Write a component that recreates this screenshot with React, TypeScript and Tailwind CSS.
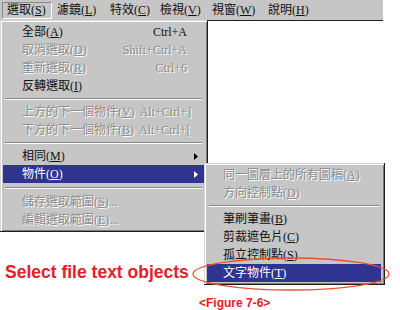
const cjk = "font-['Liberation_Serif','Noto_Sans_CJK_TC',serif]";

type Item =
  | { sep: true; h: string }
  | {
      sep?: false;
      label: string;
      key: string;
      tail?: string;
      shortcut?: string;
      disabled?: boolean;
      active?: boolean;
      arrow?: boolean;
    };

const mainMenu: Item[] = [
  { label: "全部", key: "A", shortcut: "Ctrl+A" },
  { label: "取消選取", key: "D", shortcut: "Shift+Ctrl+A", disabled: true },
  { label: "重新選取", key: "R", shortcut: "Ctrl+6", disabled: true },
  { label: "反轉選取", key: "I" },
  { sep: true, h: "h-[8px]" },
  { label: "上方的下一個物件", key: "V", shortcut: "Alt+Ctrl+]", disabled: true },
  { label: "下方的下一個物件", key: "B", shortcut: "Alt+Ctrl+[", disabled: true },
  { sep: true, h: "h-[8px]" },
  { label: "相同", key: "M", arrow: true },
  { label: "物件", key: "O", arrow: true, active: true },
  { sep: true, h: "h-[10px]" },
  { label: "儲存選取範圍", key: "S", tail: "...", disabled: true },
  { label: "編輯選取範圍", key: "E", tail: "...", disabled: true },
];

const subMenu: Item[] = [
  { label: "同一圖層上的所有圖稿", key: "A", disabled: true },
  { label: "方向控制點", key: "D", disabled: true },
  { sep: true, h: "h-[8px]" },
  { label: "筆刷筆畫", key: "B" },
  { label: "剪裁遮色片", key: "C" },
  { label: "孤立控制點", key: "S" },
  { label: "文字物件", key: "T", active: true },
];

const bar = [
  { label: "選取", key: "S", w: "w-[50px]", open: true },
  { label: "濾鏡", key: "L", w: "w-[53px]" },
  { label: "特效", key: "C", w: "w-[50px]" },
  { label: "檢視", key: "V", w: "w-[52px]" },
  { label: "視窗", key: "W", w: "w-[56px]" },
  { label: "說明", key: "H", w: "w-[50px]" },
];

const MenuRows = ({ items, pl }: { items: Item[]; pl: string }) => (
  <>
    {items.map((it, i) => {
      if (it.sep) {
        return (
          <div key={i} className={`${it.h} flex items-center px-[2px]`}>
            <div className="w-full border-t border-[#858585] border-b border-b-white" />
          </div>
        );
      }
      const color = it.active
        ? "bg-[#2e3490] text-white"
        : it.disabled
        ? "text-[#8c8c8c] [text-shadow:1px_1px_0_#ffffff]"
        : "text-[#111]";
      return (
        <div key={i} className={`h-[18px] flex items-center ${pl} pr-[17px] ${color}`}>
          <span className="flex-1 whitespace-nowrap">
            {it.label}(<u>{it.key}</u>){it.tail}
          </span>
          {it.shortcut && <span className="whitespace-nowrap pl-[5px]">{it.shortcut}</span>}
          {it.arrow && (
            <svg width="4" height="7" viewBox="0 0 4 7" className="-mr-[11px]">
              <path d="M0 0 L4 3.5 L0 7 Z" fill={it.active ? "#fff" : "#000"} />
            </svg>
          )}
        </div>
      );
    })}
  </>
);

export default function App() {
  return (
    <div className={`relative w-[400px] h-[310px] bg-white overflow-hidden text-[12px] ${cjk}`}>
      {/* Menu bar */}
      <div className="w-[383px] h-[20px] bg-[#c6c6c6] flex items-center pl-[2px]">
        {bar.map((b) => (
          <div
            key={b.label}
            className={`${b.w} h-[17px] flex items-center pl-[4px] text-[#111] ${
              b.open ? "border border-[#8a8a8a] border-r-white border-b-white" : "border border-transparent"
            }`}
          >
            {b.label}(<u>{b.key}</u>)
          </div>
        ))}
      </div>

      {/* Dropdown row */}
      <div className="flex">
        <div className="w-[208px] bg-[#c6c6c6] border-r border-b border-[#1e1e1e] shadow-[inset_1px_1px_0_#d8d8d8,inset_2px_2px_0_#ffffff,inset_-1px_-1px_0_#7c7c7c] pt-[3px] pb-[2px] pl-[3px] pr-[3px]">
          <MenuRows items={mainMenu} pl="pl-[19px]" />
        </div>
        <div className="w-[175px] border-t border-[#222]" />
      </div>

      {/* Annotation */}
      <div className="pl-[5px] pt-[30px] flex flex-col">
        <div className="font-['Liberation_Sans',Arial,sans-serif] font-bold text-[17.5px] leading-[20px] text-[#e3202a]">
          Select file text objects
        </div>
        <div className="pl-[194px] mt-[14px] font-['Liberation_Sans',Arial,sans-serif] font-bold text-[12px] leading-[14px] text-[#e3202a]">
          &lt;Figure 7-6&gt;
        </div>
      </div>

      {/* Submenu */}
      <div className="absolute left-[204px] top-[163px] w-[181px] bg-[#c6c6c6] border-r border-b border-[#1e1e1e] shadow-[inset_1px_1px_0_#d8d8d8,inset_2px_2px_0_#ffffff,inset_-1px_-1px_0_#7c7c7c] pt-[3px] pb-[2px] pl-[3px] pr-[3px]">
        <MenuRows items={subMenu} pl="pl-[16px]" />
      </div>

      {/* Highlight ellipse */}
      <svg className="absolute left-[190px] top-[255px]" width="204" height="40" viewBox="0 0 204 40">
        <ellipse cx="101" cy="19" rx="98" ry="16" fill="none" stroke="#e4522f" strokeWidth="1.3" />
      </svg>
    </div>
  );
}
